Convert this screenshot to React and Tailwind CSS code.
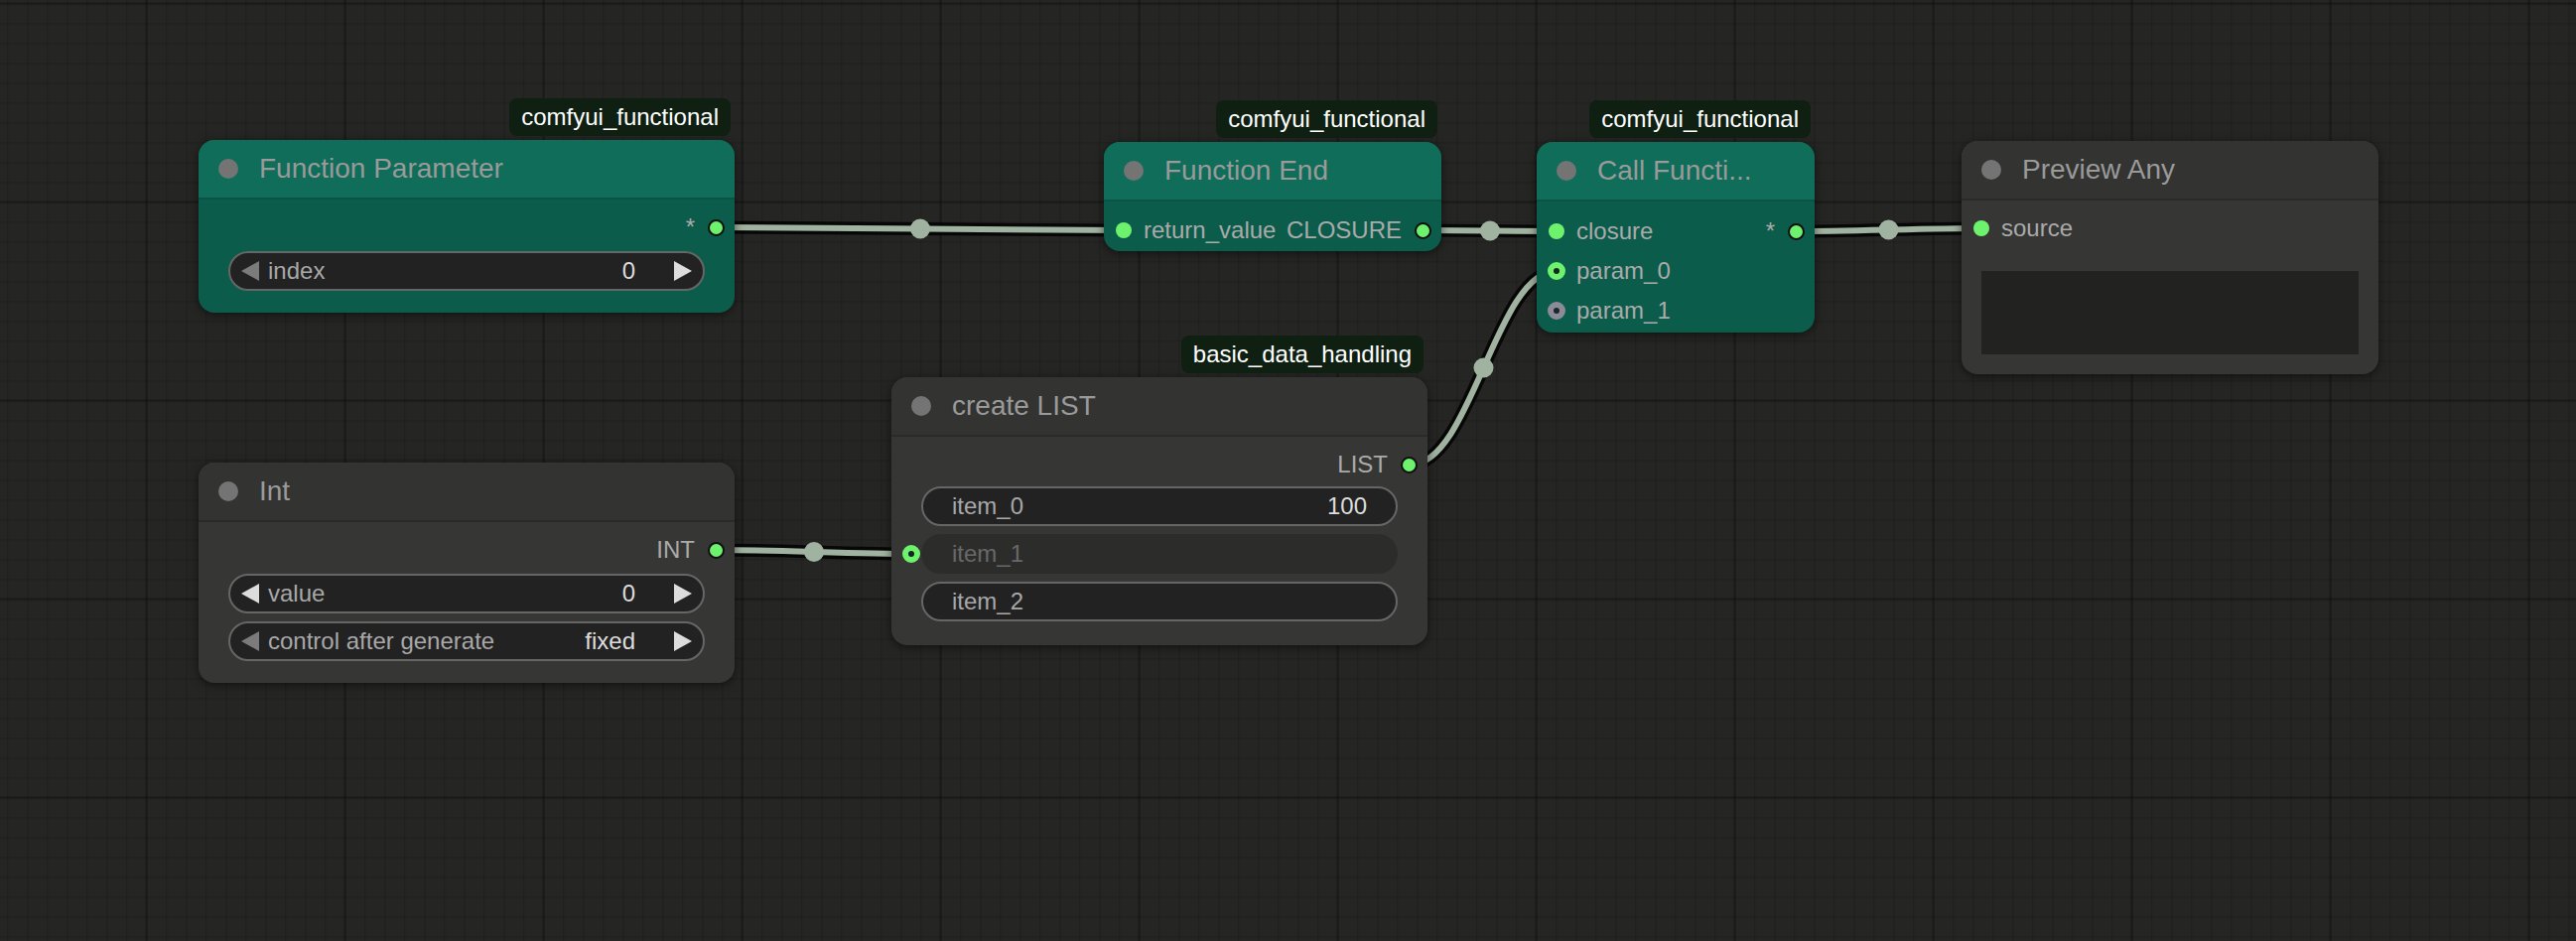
import React from "react";

// link endpoints: [outX, outY, inX, inY]
const LINKS = [
  [722, 229, 1132, 232],
  [1434, 232, 1568, 233],
  [1810, 233, 1995, 230],
  [1421, 468, 1568, 273],
  [722, 554, 918, 558],
];

function linkPath(ax, ay, bx, by) {
  const d = Math.hypot(bx - ax, by - ay) * 0.25;
  return `M${ax} ${ay} C${ax + d} ${ay} ${bx - d} ${by} ${bx} ${by}`;
}

function Canvas() {
  return (
    <svg className="absolute inset-0" width="2595" height="948">
      <defs>
        <pattern id="minor" width="20" height="20" patternUnits="userSpaceOnUse" x="7" y="3">
          <rect x="0" y="0" width="20" height="1.5" fill="rgba(0,0,0,0.12)" />
          <rect x="0" y="0" width="1.5" height="20" fill="rgba(0,0,0,0.12)" />
        </pattern>
        <pattern id="major" width="200" height="200" patternUnits="userSpaceOnUse" x="146" y="2">
          <rect x="0" y="0" width="200" height="3" fill="rgba(0,0,0,0.17)" />
          <rect x="0" y="0" width="3" height="200" fill="rgba(0,0,0,0.17)" />
        </pattern>
      </defs>
      <rect width="2595" height="948" fill="url(#minor)" />
      <rect width="2595" height="948" fill="url(#major)" />
      {LINKS.map(([ax, ay, bx, by], i) => (
        <g key={i}>
          <path d={linkPath(ax, ay, bx, by)} fill="none" stroke="rgba(0,0,0,0.8)" strokeWidth="13" />
          <path d={linkPath(ax, ay, bx, by)} fill="none" stroke="#a0b2a0" strokeWidth="6" />
          <circle cx={(ax + bx) / 2} cy={(ay + by) / 2} r="10" fill="#a0b2a0" />
        </g>
      ))}
    </svg>
  );
}

function Dot({ kind = "in" }) {
  if (kind === "out")
    return <span className="block w-[17px] h-[17px] shrink-0 rounded-full bg-[#6ef26e] border-2 border-[#101010]" />;
  if (kind === "ring")
    return <span className="block w-[18px] h-[18px] shrink-0 rounded-full border-[6px] border-[#6ef26e] bg-[#15241f]" />;
  if (kind === "ring-off")
    return <span className="block w-[18px] h-[18px] shrink-0 rounded-full border-[6px] border-[#8b8b99] bg-[#1c2824]" />;
  return <span className="block w-[16px] h-[16px] shrink-0 rounded-full bg-[#6ef26e]" />;
}

function SlotRow({ input, inDot = "in", output }) {
  return (
    <div className="h-[40px] flex items-center justify-between">
      {input ? (
        <div className={inDot === "in" ? "flex items-center pl-[12px] gap-[12px]" : "flex items-center pl-[11px] gap-[11px]"}>
          <Dot kind={inDot} />
          <span className="text-[24px] leading-none text-[#aaaaaa]">{input}</span>
        </div>
      ) : (
        <span />
      )}
      {output && (
        <div className="flex items-center pr-[10px] gap-[13px]">
          <span className="text-[24px] leading-none text-[#aaaaaa]">{output}</span>
          <Dot kind="out" />
        </div>
      )}
    </div>
  );
}

function Arrow({ dir, on }) {
  return (
    <svg width="18" height="20" viewBox="0 0 18 20" className="shrink-0">
      <polygon points={dir === "l" ? "18,0 0,10 18,20" : "0,0 18,10 0,20"} fill={on ? "#dddddd" : "#7b7b7b"} />
    </svg>
  );
}

function NumberWidget({ label, value, leftOn = false }) {
  return (
    <div className="mx-[30px] h-[40px] rounded-full border-2 border-[#666666] bg-[#222222] flex items-center pl-[11px] pr-[11px]">
      <Arrow dir="l" on={leftOn} />
      <span className="ml-[9px] text-[24px] leading-none text-[#a8a8a8]">{label}</span>
      <span className="flex-1" />
      <span className="mr-[39px] text-[24px] leading-none text-[#dddddd]">{value}</span>
      <Arrow dir="r" on />
    </div>
  );
}

function TextWidget({ label, value, disabled = false }) {
  return (
    <div
      className={
        disabled
          ? "flex-1 h-[40px] rounded-full border-2 border-transparent bg-[#2c2d2b] flex items-center justify-between px-[29px]"
          : "flex-1 h-[40px] rounded-full border-2 border-[#666666] bg-[#222222] flex items-center justify-between px-[29px]"
      }
    >
      <span className={disabled ? "text-[24px] leading-none text-[#686868]" : "text-[24px] leading-none text-[#a8a8a8]"}>{label}</span>
      <span className="text-[24px] leading-none text-[#dddddd]">{value}</span>
    </div>
  );
}

function Node({ pos, title, teal = false, badge, children }) {
  return (
    <div
      className={`absolute ${pos} rounded-[16px] shadow-[0_2px_10px_rgba(0,0,0,0.55)] ${teal ? "bg-[#0c5c4b]" : "bg-[#363735]"}`}
    >
      {badge && (
        <div className="absolute right-[4px] bottom-[calc(100%+4px)] h-[38px] px-[12px] flex items-center rounded-[8px] bg-[#0f1f12] text-white text-[24px] leading-none whitespace-nowrap">
          {badge}
        </div>
      )}
      <div
        className={`h-[60px] flex items-center pl-[20px] gap-[21px] rounded-t-[16px] border-b-2 ${teal ? "bg-[#0f6d59] border-[#0b5345]" : "bg-[#333432] border-[#2a2b29]"}`}
      >
        <span className="block w-[20px] h-[20px] rounded-full bg-[#747474]" />
        <span className="text-[28px] leading-none text-[#9a9a9a] whitespace-nowrap">{title}</span>
      </div>
      {children}
    </div>
  );
}

export default function App() {
  return (
    <div className="relative w-[2595px] h-[948px] overflow-hidden bg-[#252624] font-['Liberation_Sans',Arial,sans-serif]">
      <Canvas />

      <Node pos="left-[200px] top-[141px] w-[540px]" title="Function Parameter" teal badge="comfyui_functional">
        <div className="pt-[8px] pb-[22px]">
          <SlotRow output="*" />
          <div className="mt-[4px]">
            <NumberWidget label="index" value="0" />
          </div>
        </div>
      </Node>

      <Node pos="left-[1112px] top-[143px] w-[340px]" title="Function End" teal badge="comfyui_functional">
        <div className="pt-[9px] pb-[1px]">
          <SlotRow input="return_value" output="CLOSURE" />
        </div>
      </Node>

      <Node pos="left-[1548px] top-[143px] w-[280px]" title="Call Functi..." teal badge="comfyui_functional">
        <div className="pt-[10px] pb-[2px]">
          <SlotRow input="closure" output="*" />
          <SlotRow input="param_0" inDot="ring" />
          <SlotRow input="param_1" inDot="ring-off" />
        </div>
      </Node>

      <Node pos="left-[1976px] top-[142px] w-[420px]" title="Preview Any">
        <div className="pt-[8px] pb-[20px]">
          <SlotRow input="source" />
          <div className="mx-[20px] mt-[23px] h-[84px] bg-[#222321]" />
        </div>
      </Node>

      <Node pos="left-[898px] top-[380px] w-[540px]" title="create LIST" badge="basic_data_handling">
        <div className="pt-[8px] pb-[24px]">
          <SlotRow output="LIST" />
          <div className="mt-[2px] flex flex-col gap-[8px]">
            <div className="flex pl-[30px] pr-[30px]">
              <TextWidget label="item_0" value="100" />
            </div>
            <div className="flex items-center pl-[11px] pr-[30px] gap-[1px]">
              <Dot kind="ring" />
              <TextWidget label="item_1" value="" disabled />
            </div>
            <div className="flex pl-[30px] pr-[30px]">
              <TextWidget label="item_2" value="" />
            </div>
          </div>
        </div>
      </Node>

      <Node pos="left-[200px] top-[466px] w-[540px]" title="Int">
        <div className="pt-[8px] pb-[22px]">
          <SlotRow output="INT" />
          <div className="mt-[4px] flex flex-col gap-[8px]">
            <NumberWidget label="value" value="0" leftOn />
            <NumberWidget label="control after generate" value="fixed" />
          </div>
        </div>
      </Node>
    </div>
  );
}
